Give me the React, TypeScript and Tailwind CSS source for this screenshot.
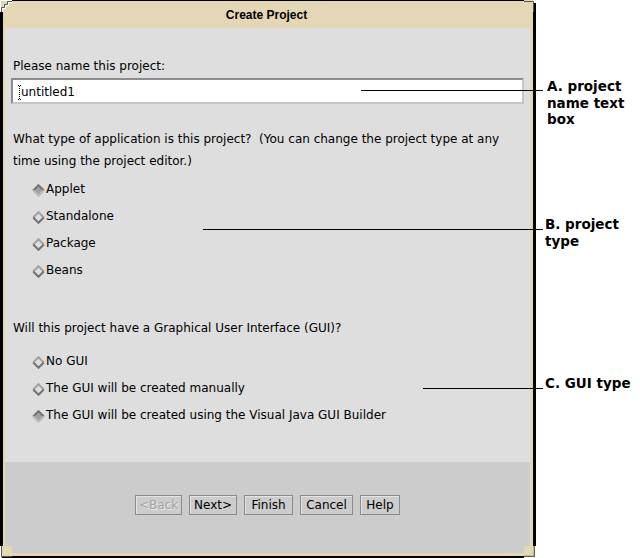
import React from "react";

function Radio({ label, selected }: { label: string; selected?: boolean }) {
  return (
    <div className="flex items-center h-[27px] pl-[21px]">
      <svg width="13" height="13" viewBox="0 0 13 13" className="mt-[1px] shrink-0">
        {selected ? (
          <>
            <polygon points="6.5,0.5 12.5,6.5 6.5,12.5 0.5,6.5" fill="#a0a0a0" />
            <polyline points="1.2,6.5 6.5,1.2 11.8,6.5" fill="none" stroke="#737373" strokeWidth="2" />
            <polyline points="1.2,6.5 6.5,11.8 11.8,6.5" fill="none" stroke="#bdbdbd" strokeWidth="2" />
          </>
        ) : (
          <>
            <polygon points="6.5,0.5 12.5,6.5 6.5,12.5 0.5,6.5" fill="#dedede" />
            <polyline points="1.2,6.5 6.5,1.2 11.8,6.5" fill="none" stroke="#a2a2a2" strokeWidth="2" />
            <polyline points="1.2,6.5 6.5,11.8 11.8,6.5" fill="none" stroke="#727272" strokeWidth="2" />
          </>
        )}
      </svg>
      <span className="ml-px leading-[27px]">{label}</span>
    </div>
  );
}

function Btn({ label, w, disabled }: { label: string; w: string; disabled?: boolean }) {
  return (
    <div
      className={`${w} h-[20px] flex items-center justify-center border border-[#8a8a8a] shadow-[inset_1px_1px_0_#e4e4e4] leading-[18px] ${
        disabled ? "text-[#a4a4a4] [text-shadow:1px_1px_0_#e8e8e8]" : "text-black"
      }`}
    >
      {label}
    </div>
  );
}

function Callout({
  lineTop,
  lineLeft,
  labelTop,
  labelLeft,
  lines,
}: {
  lineTop: number;
  lineLeft: number;
  labelTop: number;
  labelLeft: number;
  lines: string[];
}) {
  return (
    <>
      <div
        className="absolute h-px bg-black"
        style={{ top: lineTop, left: lineLeft, width: 543 - lineLeft }}
      />
      <div
        className="absolute font-['DejaVu_Sans',sans-serif] font-bold text-[13.5px] leading-[16.5px] text-black"
        style={{ top: labelTop, left: labelLeft }}
      >
        {lines.map((l) => (
          <div key={l}>{l}</div>
        ))}
      </div>
    </>
  );
}

export default function App() {
  return (
    <div className="relative w-[640px] h-[558px] bg-white overflow-hidden font-['DejaVu_Sans',sans-serif] text-[12px] text-black">
      <div className="w-[536px] h-[558px] flex flex-col bg-[#e4d7b6] border-l-[3px] border-t border-r-[3px] border-b-2 border-black pl-[2px] pr-[3px] pb-[3px]">
        <div className="h-[27px] flex items-center justify-center font-['Liberation_Sans',sans-serif] font-bold text-[12px] pr-[2px]">
          Create Project
        </div>
        <div className="flex-1 flex flex-col">
          <div className="h-[434px] bg-[#dedede] px-[6px] pt-[31px]">
            <div className="pl-[2px] leading-[14px]">Please name this project:</div>
            <div className="mt-[5px] h-[26px] bg-white border-2 border-t-[#8c8c8c] border-l-[#8c8c8c] border-b-[#c6c6c6] border-r-[#c6c6c6] flex items-start pt-[5px] pl-[5px]">
              <svg width="3" height="16" viewBox="0 0 3 16" className="shrink-0">
                <rect x="0" y="0" width="1" height="1" fill="#000" />
                <rect x="2" y="0" width="1" height="1" fill="#000" />
                <rect x="1" y="1" width="1" height="1" fill="#000" />
                <rect x="1" y="3" width="1" height="1" fill="#000" />
                <rect x="1" y="5" width="1" height="1" fill="#000" />
                <rect x="1" y="7" width="1" height="1" fill="#000" />
                <rect x="1" y="9" width="1" height="1" fill="#000" />
                <rect x="1" y="11" width="1" height="1" fill="#000" />
                <rect x="1" y="13" width="1" height="1" fill="#000" />
                <rect x="0" y="14" width="1" height="1" fill="#000" />
                <rect x="2" y="14" width="1" height="1" fill="#000" />
              </svg>
              <span className="leading-[14px]">untitled1</span>
            </div>
            <div className="mt-[24px] pl-[2px] leading-[22px]">
              What type of application is this project?&nbsp; (You can change the project type at any
              <br />
              time using the project editor.)
            </div>
            <div className="mt-[4px]">
              <Radio label="Applet" selected />
              <Radio label="Standalone" />
              <Radio label="Package" />
              <Radio label="Beans" />
            </div>
            <div className="mt-[33px] pl-[2px] leading-[22px]">
              Will this project have a Graphical User Interface (GUI)?
            </div>
            <div className="mt-[9px]">
              <Radio label="No GUI" />
              <Radio label="The GUI will be created manually" />
              <Radio label="The GUI will be created using the Visual Java GUI Builder" selected />
            </div>
          </div>
          <div className="flex-1 bg-[#cccccc] pt-[33px] flex justify-center items-start gap-[7px]">
            <Btn label="<Back" w="w-[47px]" disabled />
            <Btn label="Next>" w="w-[48px]" />
            <Btn label="Finish" w="w-[49px]" />
            <Btn label="Cancel" w="w-[53px]" />
            <Btn label="Help" w="w-[40px]" />
          </div>
        </div>
      </div>

      {/* window corner handles */}
      <svg className="absolute left-0 top-0" width="12" height="12" viewBox="0 0 12 12">
        <rect x="0" y="0" width="12" height="12" fill="#e4d7b6" />
        <rect x="0" y="0" width="12" height="1" fill="#fff" />
        <rect x="0" y="0" width="1" height="12" fill="#fff" />
        <polyline points="1.5,12 1.5,7.5 4.5,7.5 4.5,4.5 7.5,4.5 7.5,1.5 12,1.5" fill="none" stroke="#555" strokeWidth="1" />
        <polyline points="2.5,12 2.5,8.5 5.5,8.5 5.5,5.5 8.5,5.5 8.5,2.5 12,2.5" fill="none" stroke="#fff" strokeWidth="1" />
      </svg>
      <svg className="absolute left-[524px] top-0" width="12" height="12" viewBox="0 0 12 12">
        <rect x="0" y="0" width="12" height="12" fill="#fff" />
        <rect x="0" y="0" width="9" height="12" fill="#e4d7b6" />
        <polyline points="0,1.5 9.5,1.5 9.5,12" fill="none" stroke="#555" strokeWidth="1" />
        <rect x="10" y="3" width="2" height="9" fill="#000" />
      </svg>
      <svg className="absolute left-0 top-[546px]" width="12" height="12" viewBox="0 0 12 12">
        <rect x="0" y="0" width="12" height="12" fill="#e4d7b6" />
        <rect x="0" y="0" width="1" height="12" fill="#fff" />
        <polyline points="1.5,0 1.5,10.5 12,10.5" fill="none" stroke="#555" strokeWidth="1" />
        <rect x="2" y="11" width="10" height="1" fill="#000" />
      </svg>
      <svg className="absolute left-[524px] top-[546px]" width="12" height="12" viewBox="0 0 12 12">
        <rect x="0" y="0" width="12" height="12" fill="#e4d7b6" />
        <polyline points="0,10.5 10.5,10.5 10.5,0" fill="none" stroke="#6b6045" strokeWidth="1.5" />
        <rect x="0" y="11" width="12" height="1" fill="#fff" />
        <rect x="11" y="0" width="1" height="12" fill="#fff" />
      </svg>

      <Callout lineTop={90} lineLeft={361} labelTop={78} labelLeft={547} lines={["A. project", "name text", "box"]} />
      <Callout lineTop={229} lineLeft={203} labelTop={216} labelLeft={545} lines={["B. project", "type"]} />
      <Callout lineTop={388} lineLeft={423} labelTop={375} labelLeft={545} lines={["C. GUI type"]} />
    </div>
  );
}
